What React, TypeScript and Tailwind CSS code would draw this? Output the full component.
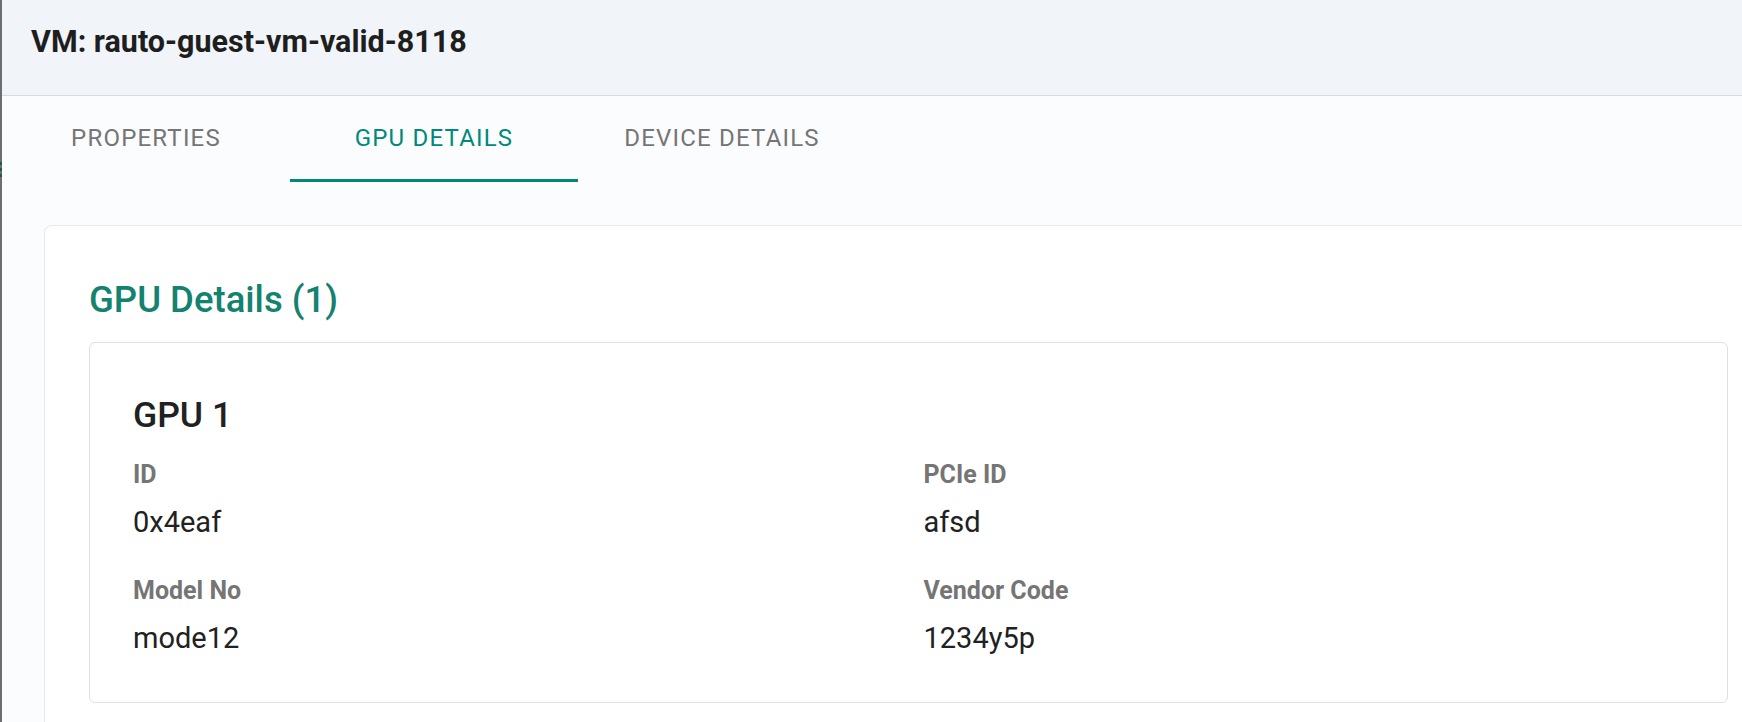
import React from 'react';

const tabs = ['PROPERTIES', 'GPU DETAILS', 'DEVICE DETAILS'];

const fields = [
  { label: 'ID', value: '0x4eaf' },
  { label: 'PCIe ID', value: 'afsd' },
  { label: 'Model No', value: 'mode12' },
  { label: 'Vendor Code', value: '1234y5p' },
];

export default function App() {
  const active = 1;

  return (
    <div className="flex h-[722px] w-full overflow-hidden font-['Roboto',_'Liberation_Sans',_sans-serif]">
      {/* edge of the page behind the drawer */}
      <div className="flex w-[2px] flex-col bg-[#6e6e6e]">
        <div className="mt-[162px] flex flex-col gap-[3px]">
          <span className="h-[3px] w-[2px] bg-[#1f5a4c]" />
          <span className="h-[3px] w-[2px] bg-[#1f5a4c]" />
          <span className="h-[3px] w-[2px] bg-[#1f5a4c]" />
        </div>
      </div>

      <div className="flex min-w-0 flex-1 flex-col bg-[#fbfcfe]">
        <header className="h-[96px] shrink-0 border-b border-[#d6dae0] bg-[#f1f4f9] pl-[29px] pt-[24px]">
          <h1 className="text-[30.5px] font-bold leading-[36px] text-[#1e1e1e]">
            VM: rauto-guest-vm-valid-8118
          </h1>
        </header>

        <nav className="flex shrink-0">
          {tabs.map((tab, i) => (
            <button
              key={tab}
              className={
                i === active
                  ? 'flex h-[86px] w-[288px] items-center justify-center border-b-[3px] border-[#00897b] text-[24px] tracking-[1.2px] text-[#00897b]'
                  : 'flex h-[86px] w-[288px] items-center justify-center border-b-[3px] border-transparent text-[24px] tracking-[1.2px] text-[#757575]'
              }
            >
              {tab}
            </button>
          ))}
        </nav>

        <section className="ml-[42px] mt-[43px] flex-1 rounded-tl-lg border-l border-t border-[#e6e8eb] bg-white pl-[44px] pr-[14px] pt-[53px]">
          <h2 className="text-[36.5px] font-medium leading-[41px] text-[#13826f]">
            GPU Details (1)
          </h2>

          <div className="mt-[22px] rounded-md border border-[#e0e0e0] bg-white pb-[47px] pl-[43px] pr-[43px] pt-[52px]">
            <h3 className="text-[35.5px] font-medium leading-[40px] text-[#212121]">GPU 1</h3>
            <div className="mt-[26px] grid grid-cols-2 gap-x-[30px] gap-y-[38px]">
              {fields.map((f) => (
                <div key={f.label}>
                  <div className="text-[25px] font-bold leading-[28px] text-[#757575]">{f.label}</div>
                  <div className="mt-[17px] text-[29px] leading-[33px] text-[#212121]">{f.value}</div>
                </div>
              ))}
            </div>
          </div>
        </section>
      </div>
    </div>
  );
}
